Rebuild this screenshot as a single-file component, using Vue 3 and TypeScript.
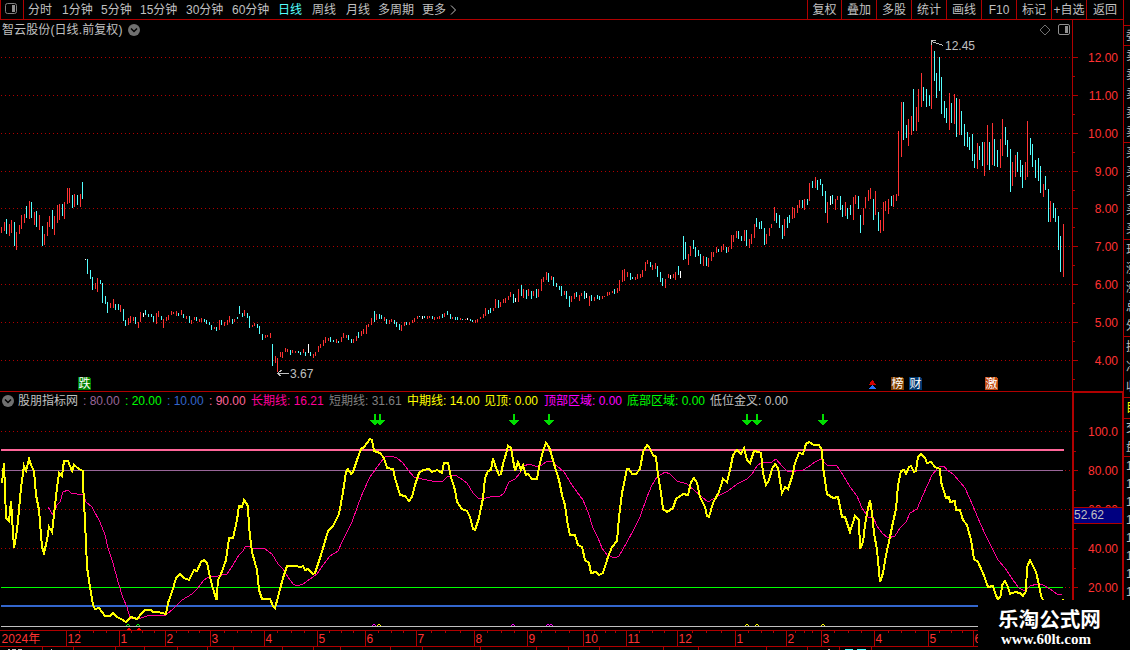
<script setup lang="ts">
import { ref } from 'vue'

interface Bar {
  kind: string
  x: number
  top: number
  bottom: number
}

interface Legend {
  text: string
  color: string
  width: number
}

const periods = [
  { name: '分时', width: 34 },
  { name: '1分钟', width: 39 },
  { name: '5分钟', width: 39 },
  { name: '15分钟', width: 46 },
  { name: '30分钟', width: 46 },
  { name: '60分钟', width: 46 },
  { name: '日线', width: 34 },
  { name: '周线', width: 34 },
  { name: '月线', width: 32 },
  { name: '多周期', width: 44 },
  { name: '更多', width: 27 },
]
const active = ref('日线')

const actions = [
  { name: '复权', width: 34 },
  { name: '叠加', width: 35 },
  { name: '多股', width: 35 },
  { name: '统计', width: 35 },
  { name: '画线', width: 35 },
  { name: 'F10', width: 35 },
  { name: '标记', width: 35 },
  { name: '+自选', width: 35 },
  { name: '返回', width: 37 },
]

const legends: Legend[] = [
  { text: ': 80.00', color: '#996699', width: 42 },
  { text: ': 20.00', color: '#00ff00', width: 42 },
  { text: ': 10.00', color: '#3366cc', width: 42 },
  { text: ': 90.00', color: '#ff6699', width: 42 },
  { text: '长期线: 16.21', color: '#ff0099', width: 78 },
  { text: '短期线: 31.61', color: '#808080', width: 78 },
  { text: '中期线: 14.00', color: '#ffff00', width: 77 },
  { text: '见顶: 0.00', color: '#ffff00', width: 60 },
  { text: '顶部区域: 0.00', color: '#ff00ff', width: 83 },
  { text: '底部区域: 0.00', color: '#00ff00', width: 83 },
  { text: '低位金叉: 0.00', color: '#c0c0c0', width: 83 },
]

// r = up, c = down, w = flat; x,high,low
const barData = `
r1,227,233 r4,222,231 c6,219,234 r9,224,236 r11,220,233 c14,222,246 r16,232,250 r19,225,234 r21,215,229 r24,214,223
c26,206,218 r29,201,219 c31,202,218 r34,212,225 c36,211,227 r39,215,230 c42,226,246 r44,234,245 r47,222,236 r49,216,227
c52,210,229 r54,216,235 r57,205,223 r59,204,220 c62,204,216 r64,202,219 r67,188,204 r69,188,203 c72,195,208 r74,194,207
c77,195,205 r80,194,207 c82,182,199 w85,259,260 c87,259,274 c90,270,279 c92,277,290 r95,283,289 r97,278,292 c100,280,284
c102,283,303 c105,296,304 c107,302,313 r110,303,308 r113,299,308 c115,304,310 c118,304,310 r120,305,312 c123,309,321 c125,320,326
r128,318,325 r130,316,323 r133,317,321 c135,317,324 r138,322,328 r140,312,322 w143,313,317 c145,310,315 c148,314,317 c151,314,317
c153,316,322 r156,313,324 r158,311,317 c161,316,320 r163,319,328 r166,317,321 r168,315,320 r171,311,315 r173,312,314 r176,311,316
c178,313,316 r181,310,315 c183,314,318 r186,316,319 c189,316,323 r191,320,324 r194,317,320 c196,317,321 r199,319,322 r201,318,322
c204,319,322 c206,320,324 c209,322,325 c211,325,330 r214,327,329 c216,327,331 r219,320,330 c221,320,325 r224,322,326 r227,320,325
r229,316,322 c232,319,324 r234,319,322 c237,317,319 c239,306,314 c242,313,317 r244,310,316 c247,313,318 c249,316,328 r252,325,327
r254,323,326 c257,324,328 c259,326,334 c262,334,340 r265,335,338 r267,335,337 r270,333,338 c272,344,366 r275,356,363 r277,358,372
r280,352,357 r282,352,358 r285,348,352 r287,349,352 c290,350,355 r292,350,353 r295,351,353 c298,351,353 c300,352,355 r303,349,353
c305,352,356 w308,344,353 c310,352,356 r313,354,358 r315,352,356 r318,346,352 r320,344,348 r323,340,346 r325,337,343 r328,338,341
c330,337,342 c333,340,342 r336,339,343 c338,341,343 r341,337,342 r343,333,338 r346,335,338 c348,335,340 c351,339,343 r353,339,343
r356,336,341 c358,332,338 r361,331,336 r363,329,334 r366,325,334 r368,324,327 r371,318,325 c374,311,322 r376,314,320 c379,314,319
c381,315,319 r384,317,321 c386,319,324 r389,320,324 r391,319,322 c394,320,324 c396,322,327 c399,324,330 r401,325,331 r404,322,326
c406,322,325 r409,322,325 r412,320,323 r414,318,322 r417,316,319 c419,316,317 w422,316,319 c424,316,318 r427,316,319 r429,316,318
c432,316,319 r434,317,320 r437,317,319 r439,316,319 c442,314,318 r444,313,317 c447,311,315 c450,314,319 r452,317,319 c455,317,320
c457,317,320 r460,318,320 c462,319,320 r465,319,320 w467,318,320 c470,319,321 c472,320,322 r475,320,323 r477,319,322 r480,317,319
r483,314,318 r485,308,316 c488,310,314 c490,308,313 r493,308,311 r495,299,308 c498,300,308 r500,302,307 r503,299,303 r505,298,303
r508,296,300 r510,292,297 c513,294,303 w515,298,302 r518,289,302 c521,285,296 r523,289,298 c526,290,299 r528,289,296 c531,291,299
r533,291,296 c536,289,298 r538,289,297 r541,279,291 r543,277,282 r546,272,280 c548,273,282 r551,276,280 c553,277,286 c556,283,287
c559,286,290 c561,286,296 r564,291,295 c566,291,299 c569,296,307 r571,296,302 r574,293,299 c576,292,297 r579,295,301 r581,293,296
c584,291,299 w586,293,298 r589,296,306 c591,295,301 r594,297,301 c597,295,299 c599,296,300 r602,296,299 r604,296,297 r607,292,296
r609,292,295 r612,291,293 c614,289,294 r617,288,293 r619,280,291 r622,270,282 r624,269,281 r627,272,277 c630,273,280 c632,277,279
r635,277,280 r637,274,279 r640,274,278 r642,270,277 r645,262,271 r647,260,264 c650,262,267 r652,265,270 r655,263,269 c657,266,277
c660,272,282 c662,278,286 r665,279,288 r668,274,278 w670,275,279 r673,274,278 r675,272,280 c678,266,275 w680,271,278 c683,236,260
c685,242,259 r688,254,265 r690,246,256 c693,240,249 c695,247,257 c698,250,256 c700,254,264 r703,256,266 c706,257,266 r708,258,267
r711,252,261 r713,252,257 r716,247,253 c718,249,252 r721,246,252 r723,244,250 c726,247,253 r728,247,252 r731,235,249 r733,235,242
r736,231,238 c738,231,239 c741,236,241 r744,230,241 c746,230,246 r749,239,248 r751,234,244 r754,224,238 c756,218,227 c759,222,229
c761,221,229 c764,228,245 r766,234,244 r769,228,236 r771,224,228 r774,207,221 c776,213,223 c779,215,228 c782,225,239 r784,219,236
c787,217,228 c789,215,223 r792,207,219 r794,208,218 r797,205,213 r799,200,208 c802,200,208 r804,199,210 c807,199,205 r809,183,201
c812,181,188 r815,177,188 c817,180,190 c820,179,185 c822,184,196 c825,191,213 r827,202,223 w830,196,205 c832,195,204 r835,199,210
r837,196,200 c840,196,210 c842,205,217 r845,202,216 c847,208,219 c850,205,215 r853,197,220 r855,195,204 c858,196,209 c860,215,233
r863,208,225 r865,197,208 r868,190,201 r870,188,199 c873,199,220 r875,191,215 c878,212,231 r880,220,233 r883,202,231 r885,201,211
r888,199,214 c891,196,206 r893,195,207 r896,194,201 r898,131,196 r901,102,157 c903,102,140 c906,125,138 r908,119,146 r911,116,135
c913,89,131 r916,107,131 r918,89,122 r921,73,107 c923,87,101 c926,89,107 c929,95,106 r931,42,109 c934,51,81 c936,73,98
c939,57,91 c941,77,114 c944,101,118 c946,108,123 r949,93,130 c951,103,123 r954,94,124 c956,98,137 r959,99,135 c961,111,135
c964,124,146 c967,132,147 c969,137,150 c972,134,161 c974,154,168 r977,143,169 c979,146,160 c982,142,166 r984,142,176 r987,125,165
c989,142,170 r992,123,165 c994,139,166 c997,150,167 r1000,139,168 r1002,119,156 c1005,127,145 c1007,140,157 c1010,149,192 r1012,162,186
r1015,155,177 c1017,152,172 c1020,160,177 c1022,165,188 r1025,162,180 r1027,121,177 c1030,138,155 c1032,144,167 c1035,160,178 c1038,158,181
c1040,166,193 r1043,184,197 c1045,176,190 c1048,189,222 r1050,201,222 c1053,203,218 c1055,208,222 c1058,216,250 c1060,236,272 r1063,224,277`

const bars: Bar[] = barData.trim().split(/\s+/).map((s) => {
  const [x, top, bottom] = s.slice(1).split(',').map(Number)
  return { kind: s[0], x, top, bottom }
})

const midLine = `2,483 4,463 6,518 9,521 11,501 14,548 17,530 19,510 21,488 24,466 26,471 29,459 31,465 34,471 36,495 39,510 42,547
44,553 47,540 49,527 52,532 54,515 57,488 59,473 62,476 64,461 68,461 72,471 74,465 79,469 83,471 83.5,493 84.5,512 86,543 87,567
90,587 93,605 95,609 99,608 105,616 110,616 113,613 117,617 121,619 126,622 131,617 137,619 142,613 145,610 151,610 153,612 158,612
166,614 168,603 172,592 176,578 180,574 184,578 189,580 194,570 197,571 201,562 204,560 207,563 210,577 212,585 216.5,600 218,580
221,574 226,560 229,538 233,538 237,520 239,506 242,507 244,500 248,506 249,527 252,552 257,570 259,590 262,599 270,599 273,606
275,608 278,597 283,578 287,566 295,566 301,567 303,566 305,570 308,569 313,574 315,573 321,555 328,531 333,526 339,514 343,492
346,472 348,469 351,474 353,472 357,460 361,449 364,447 370,439 372,440 374,451 380,453 384,458 387,468 393,469 395,478 400,495
405,496 409,501 412,497 415,485 419,473 423,470 429,469 432,472 437,470 442,473 444,463 448,463 451,477 455,490 457,502 462,509
467,511 470,517 473,529 475,530 479,518 481,508 483,498 485,478 488,471 491,470 493,458 496,468 499,475 501,474 503,464 506,454
508,446 511,448 515,471 518,462 521,470 523,465 526,475 528,474 532,479 537,479 539,467 543,451 546,443 549,447 551,453 554,464
559,480 562,495 565,505 567,520 570,535 575,535 578,545 582,547 585,560 589,563 591,573 596,572 599,575 603,573 608,557 612,547
617,541 619,517 622,493 627,469 629,469 632,474 636,474 640,469 643,452 647,445 649,447 653,455 656,457 658,475 661,493 663,509
667,512 673,508 676,499 683,494 688,495 691,482 694,478 697,483 700,497 705,507 707,516 709,517 713,503 719,492 723,479 727,482
730,470 733,455 737,450 741,454 744,448 747,460 750,463 754,451 759,452 761,453 763,473 766,485 769,480 772,469 775,464 778,468
781,487 782,493 785,487 788,489 792,477 795,463 799,453 803,454 806,444 809,442 814,445 819,445 822,450 823,467 827,494 833,498
838,497 842,517 845,517 850,532 855,516 859,520 860,549 863,542 865,525 867,513 870,500 872,513 874,533 877,550 880,582 883,573
886,555 890,537 893,522 896,509 898,485 901,471 904,470 906,474 909,467 911,466 914,472 916,471 918,457 921,454 925,458 927,463
931,462 935,467 940,469 941,482 946,498 949,497 950,502 955,501 956,510 960,510 963,520 967,525 971,540 974,559 978,562 983,573
988,587 993,586 995,593 998,600 1001,595 1002,585 1005,581 1008,587 1010,594 1015,592 1020,593 1023,596 1026,591 1027,567 1030,560
1033,566 1036,572 1039,585 1041,596 1043,600 1048,608 1060,606 1063,599`

const longLine = `48,507 53,515 57,505 60,502 63,492 68,490 72,494 75,493 77,494 83,494 86,502 92,507 100,522 105,535 108,548 113,563
118,582 123,598 127,607 130,618 133,618 138,619 147,616 166,615 173,609 182,600 192,594 198,588 204,580 209,577 218,576 227,574
233,565 239,555 243,551 245,547 248,546 252,548 265,549 272,554 278,564 283,569 288,577 293,584 297,586 303,584 310,579 317,574
323,565 330,556 338,551 343,540 352,522 358,505 363,492 370,477 380,463 385,457 391,456 397,458 403,463 408,470 414,477 422,479
432,481 443,481 447,477 455,475 460,478 467,483 473,493 478,498 483,499 493,496 499,497 504,493 509,482 515,479 520,473 523,466
530,464 537,467 542,465 547,461 552,461 557,466 564,472 572,485 577,492 583,500 588,512 593,528 598,538 602,548 607,555 615,558
619,556 627,542 633,531 640,517 647,497 652,485 657,477 665,472 670,474 677,481 687,484 695,491 702,497 708,502 713,499 722,494
728,491 737,484 747,479 752,474 757,466 762,462 772,462 776,459 782,466 787,471 793,472 798,470 803,470 808,467 815,462 821,459
827,465 837,466 843,475 850,487 857,496 862,508 868,517 873,517 877,526 882,533 888,538 895,536 900,528 906,522 910,513 917,509
923,495 932,475 938,468 940,466 944,466 947,470 953,474 960,482 965,488 973,506 980,523 987,538 993,550 998,560 1005,568 1013,580
1019,588 1025,591 1030,586 1037,584 1043,585 1050,589 1057,594 1062,595`

const priceTicks = [
  { y: 57, label: '12.00' },
  { y: 95, label: '11.00' },
  { y: 133, label: '10.00' },
  { y: 171, label: '9.00' },
  { y: 208, label: '8.00' },
  { y: 246, label: '7.00' },
  { y: 284, label: '6.00' },
  { y: 322, label: '5.00' },
  { y: 360, label: '4.00' },
]

const scaleTicks = [
  { y: 431, label: '100.0' },
  { y: 470, label: '80.00' },
  { y: 509, label: '60.00' },
  { y: 548, label: '40.00' },
  { y: 587, label: '20.00' },
]

const badges = [
  { x: 78, text: '跌', color: '#008000' },
  { x: 891, text: '榜', color: '#804000' },
  { x: 909, text: '财', color: '#003870' },
  { x: 985, text: '激', color: '#c04a10' },
]

const arrows = [375, 380, 514, 549, 747, 757, 823]

const signals = [
  { x: 128, color: '#00ff00' },
  { x: 138, color: '#00ff00' },
  { x: 374, color: '#ff00ff' },
  { x: 379, color: '#ffff00' },
  { x: 513, color: '#ff00ff' },
  { x: 548, color: '#ff00ff' },
  { x: 551, color: '#ff00ff' },
  { x: 747, color: '#ffff00' },
  { x: 757, color: '#ffff00' },
  { x: 823, color: '#ffff00' },
]

const months = [
  { x: 66, label: '12' },
  { x: 119, label: '1' },
  { x: 165, label: '2' },
  { x: 210, label: '3' },
  { x: 264, label: '4' },
  { x: 317, label: '5' },
  { x: 365, label: '6' },
  { x: 416, label: '7' },
  { x: 474, label: '8' },
  { x: 527, label: '9' },
  { x: 583, label: '10' },
  { x: 626, label: '11' },
  { x: 677, label: '12' },
  { x: 735, label: '1' },
  { x: 786, label: '2' },
  { x: 821, label: '3' },
  { x: 874, label: '4' },
  { x: 928, label: '5' },
  { x: 973, label: '6' },
]

// three week marks inside every month
const weekTicks = months.slice(0, -1).flatMap((m, i) => {
  const step = (months[i + 1].x - m.x) / 4
  return [1, 2, 3].map((n) => Math.round(m.x + step * n))
})

const footTicks = [42, 73, 115, 144, 177, 207, 233, 282, 313, 340, 390, 422, 480, 536, 568, 599, 663, 698, 766, 807, 839, 871]

const quotes = [
  { rows: [], height: 6 },
  { rows: ['委'], height: 20 },
  { rows: ['卖', '卖', '卖', '卖', '卖'], height: 97 },
  { rows: ['买', '买', '买', '买', '买'], height: 97 },
  { rows: ['现', '涨', '涨', '总', '外'], height: 97 },
  { rows: ['换', '净', '收'], height: 61 },
  { rows: ['目'], height: 21, hot: true },
  { rows: ['交', '盘'], height: 38 },
  { rows: ['1', '1', '1', '1', '1', '1', '1', '1'], height: 144 },
]
</script>

<template>
  <div class="terminal">
    <header class="toolbar">
      <div class="toggle">
        <svg width="12" height="11" viewBox="0 0 12 11">
          <rect x="0.5" y="0.5" width="11" height="10" rx="2" fill="none" stroke="#808080" />
          <rect x="7" y="2" width="3" height="7" fill="#909090" />
        </svg>
      </div>
      <nav class="periods">
        <span
          v-for="p in periods"
          :key="p.name"
          :class="{ active: p.name === active }"
          :style="{ width: p.width + 'px' }"
          @click="active = p.name"
        >{{ p.name }}</span>
        <svg width="8" height="10" viewBox="0 0 8 10">
          <path d="M2 0.500L6.500 5L2 9.500" fill="none" stroke="#c0c0c0" />
        </svg>
      </nav>
      <div class="actions">
        <span v-for="a in actions" :key="a.name" :style="{ width: a.width + 'px' }">{{ a.name }}</span>
      </div>
    </header>

    <div class="body">
      <main class="charts">
        <section class="panel price">
          <div class="plot">
            <div class="title">
              <span class="stock">智云股份(日线.前复权)</span>
              <svg class="chevron" width="12" height="12" viewBox="0 0 12 12">
                <circle cx="6" cy="6" r="6" fill="#707070" />
                <path d="M3 4.5L6 7.5L9 4.5" fill="none" stroke="#000" stroke-width="1.5" />
              </svg>
              <svg class="tools" width="32" height="12" viewBox="0 0 32 12">
                <path d="M6 1L11 6L6 11L1 6Z" fill="none" stroke="#707070" />
                <rect x="19.5" y="0.5" width="11" height="10" rx="1.5" fill="none" stroke="#909090" />
                <rect x="26" y="2" width="3" height="7" fill="#909090" />
              </svg>
            </div>
            <svg width="1072" height="351" viewBox="0 40 1072 351" shape-rendering="crispEdges">
              <line v-for="t in priceTicks" :key="t.y" class="grid" x1="1" x2="1071" :y1="t.y + 0.5" :y2="t.y + 0.5" />
              <rect
                v-for="b in bars"
                :key="b.x"
                :class="b.kind"
                :x="b.x"
                :y="b.top"
                width="1"
                :height="b.bottom - b.top"
              />
              <g fill="none" stroke="#c0c0c0">
                <path d="M931.5 45V40.5H936M932 41.5L943 45.5" />
                <path d="M277 373.500H289M281.500 370L277.500 373.500L281.500 376.500" />
              </g>
              <text class="label" x="945" y="50">12.45</text>
              <text class="label" x="290" y="378">3.67</text>
              <g v-for="b in badges" :key="b.x">
                <path :d="`M${b.x} 377h11l2 2v11h-13z`" :fill="b.color" />
                <text class="badge" :x="b.x + 0.5" y="388">{{ b.text }}</text>
              </g>
              <path d="M872.500 380L876.500 385H868.500Z" fill="#d00000" />
              <path d="M872.500 384.500L876.500 389H868.500Z" fill="#2870ff" />
            </svg>
          </div>
          <svg class="axis" width="51" height="371" viewBox="1072 20 51 371" shape-rendering="crispEdges">
            <rect class="rule" x="1072" y="20" width="1" height="371" />
            <g v-for="t in priceTicks" :key="t.y">
              <rect class="rule" x="1073" :y="t.y" width="5" height="1" />
              <rect class="rule" x="1073" :y="t.y + 19" width="2" height="1" />
              <text x="1118" :y="t.y + 5">{{ t.label }}</text>
            </g>
          </svg>
        </section>

        <section class="panel indicator">
          <div class="plot">
            <div class="legend">
              <svg class="chevron" width="12" height="12" viewBox="0 0 12 12">
                <circle cx="6" cy="6" r="6" fill="#707070" />
                <path d="M3 4.5L6 7.5L9 4.5" fill="none" stroke="#000" stroke-width="1.5" />
              </svg>
              <span class="name">股朋指标网</span>
              <span
                v-for="l in legends"
                :key="l.text"
                :style="{ color: l.color, width: l.width + 'px' }"
              >{{ l.text }}</span>
            </div>
            <svg width="1072" height="221" viewBox="0 409 1072 221" shape-rendering="crispEdges">
              <line v-for="t in scaleTicks" :key="t.y" class="grid" x1="1" x2="1071" :y1="t.y + 0.5" :y2="t.y + 0.5" />
              <rect x="1" y="449" width="1063" height="2" fill="#ff6699" />
              <rect x="1" y="470" width="1062" height="1" fill="#996699" />
              <rect x="1" y="587" width="1062" height="1" fill="#00ff00" />
              <rect x="1" y="605" width="1063" height="2" fill="#3366cc" />
              <rect x="1" y="626" width="1062" height="1" fill="#c0c0c0" />
              <path
                v-for="s in signals"
                :key="s.x"
                :d="`M${s.x - 2} 625h1v1h-1zM${s.x - 1} 624h2v1h-2zM${s.x + 1} 625h1v1h-1z`"
                :fill="s.color"
              />
              <path d="M127 630h4v-1h-1v-1h-2v1h-1zM137 630h4v-1h-1v-1h-2v1h-1z" fill="#ff0000" />
              <polyline :points="longLine" fill="none" stroke="#ff0099" />
              <polyline :points="midLine" fill="none" stroke="#ffff00" stroke-width="2" />
              <path
                v-for="x in arrows"
                :key="x"
                :d="`M${x - 1} 414h2v6h4l-5 6l-5 -6h4z`"
                fill="#00dd00"
              />
            </svg>
          </div>
          <svg class="axis" width="51" height="239" viewBox="1072 391 51 239" shape-rendering="crispEdges">
            <path class="rule" d="M1072 391h51v2h-49v237h-2z" />
            <rect class="rule" x="1122" y="391" width="1" height="239" />
            <g v-for="t in scaleTicks" :key="t.y">
              <rect class="rule" x="1074" :y="t.y" width="4" height="1" />
              <rect class="rule" x="1074" :y="t.y + 20" width="2" height="1" />
              <text x="1118" :y="t.y + 5">{{ t.label }}</text>
            </g>
            <rect class="rule" x="1074" y="507" width="49" height="17" />
            <rect x="1074" y="508" width="48" height="15" fill="#000080" />
            <text class="current" x="1074" y="519">52.62</text>
          </svg>
        </section>

        <svg class="dates" width="1123" height="20" viewBox="0 630 1123 20" shape-rendering="crispEdges">
          <rect class="rule" x="0" y="630" width="1123" height="1" />
          <rect class="rule" x="0" y="646" width="1123" height="1" />
          <rect v-for="x in weekTicks" :key="x" class="rule" :x="x" y="631" width="1" height="2" />
          <rect v-for="x in footTicks" :key="x" class="rule" :x="x" y="647" width="1" height="3" />
          <text x="1.500" y="643">2024年</text>
          <g v-for="m in months" :key="m.x">
            <rect class="rule" :x="m.x" y="631" width="1" height="15" />
            <text :x="m.x + 1.5" y="643">{{ m.label }}</text>
          </g>
          <path d="M8 649h2v1h-2zM12 649h4v1h-4zM18 649h4v1h-4zM51 649h1v1h-1zM828 649h2v1h-2z" fill="#c0c0c0" />
          <path d="M845 649h8v1h-8zM857 649h9v1h-9z" fill="#54ffff" />
        </svg>
      </main>

      <aside class="quotes">
        <div
          v-for="(q, i) in quotes"
          :key="i"
          class="group"
          :class="{ hot: q.hot }"
          :style="{ height: q.height + 'px' }"
        >
          <span v-for="(r, j) in q.rows" :key="j">{{ r }}</span>
        </div>
      </aside>
    </div>

    <div class="watermark">
      <strong>乐淘公式网</strong>
      <em>www.60lt.com</em>
    </div>
  </div>
</template>

<style>
body {
  margin: 0;
  background: #000;
}
</style>

<style scoped>
.terminal {
  position: relative;
  width: 1130px;
  height: 650px;
  overflow: hidden;
  background: #000;
  color: #c0c0c0;
  font-family: "Liberation Sans", "Noto Sans CJK SC", sans-serif;
  font-size: 12px;
  line-height: 18px;
  white-space: nowrap;
}

svg {
  display: block;
  flex: none;
}

.toolbar {
  display: flex;
  box-sizing: border-box;
  width: 1124px;
  height: 20px;
  border-bottom: 1px solid #b00000;
  border-left: 1px solid #b00000;
}

.toggle {
  box-sizing: border-box;
  width: 23px;
  padding: 3px 0 0 4px;
  border-right: 1px solid #b00000;
}

.periods {
  display: flex;
  align-items: center;
  padding-left: 4px;
}

.periods span {
  flex: none;
  cursor: pointer;
}

.periods .active {
  color: #54ffff;
}

.actions {
  display: flex;
  margin-left: auto;
  border-right: 1px solid #b00000;
}

.actions span {
  display: flex;
  align-items: center;
  justify-content: center;
  box-sizing: border-box;
  padding-top: 1px;
  border-left: 1px solid #b00000;
}

.body {
  display: flex;
}

.charts {
  flex: none;
  width: 1123px;
}

.panel {
  display: flex;
}

.plot {
  width: 1072px;
}

.title {
  display: flex;
  align-items: center;
  box-sizing: border-box;
  height: 20px;
  padding: 0 1px 1px 2px;
}

.stock {
  width: 126px;
  letter-spacing: 0.1px;
}

.title .tools {
  margin-left: auto;
}

.indicator .plot {
  box-sizing: border-box;
  height: 239px;
  border-top: 1px solid #b00000;
}

.legend {
  display: flex;
  align-items: center;
  height: 17px;
  padding-left: 2px;
}

.legend span {
  flex: none;
}

.legend .name {
  width: 65px;
  margin-left: 4px;
}

.grid {
  stroke: #b00000;
  stroke-dasharray: 1 3;
}

.rule {
  fill: #b00000;
}

.r {
  fill: #ff3232;
}

.c {
  fill: #54ffff;
}

.w {
  fill: #ffffff;
}

.label {
  fill: #c0c0c0;
}

.badge {
  fill: #ffffff;
}

.axis text {
  fill: #ff3232;
  text-anchor: end;
}

.axis .current {
  fill: #c0c0c0;
  text-anchor: start;
}

.dates text {
  fill: #ff3232;
}

.quotes {
  box-sizing: border-box;
  width: 7px;
  height: 630px;
  overflow: hidden;
  border-left: 1px solid #b00000;
}

.group {
  display: flex;
  flex-direction: column;
  justify-content: space-around;
  box-sizing: border-box;
  padding-left: 2px;
  border-bottom: 1px solid #b00000;
  overflow: hidden;
}

.group.hot {
  color: #ffff00;
}

/* site mark laid over the lower right corner */
.watermark {
  position: absolute;
  right: 0;
  bottom: 0;
  display: flex;
  flex-direction: column;
  box-sizing: border-box;
  width: 152px;
  height: 50px;
  padding: 7px 0 0 20px;
  background: #000;
  color: #fff;
}

.watermark strong {
  font: bold 20.6px/23px "Noto Sans CJK SC", sans-serif;
}

.watermark em {
  padding-left: 3px;
  font: bold 15px/18px "Liberation Serif", serif;
}
</style>
